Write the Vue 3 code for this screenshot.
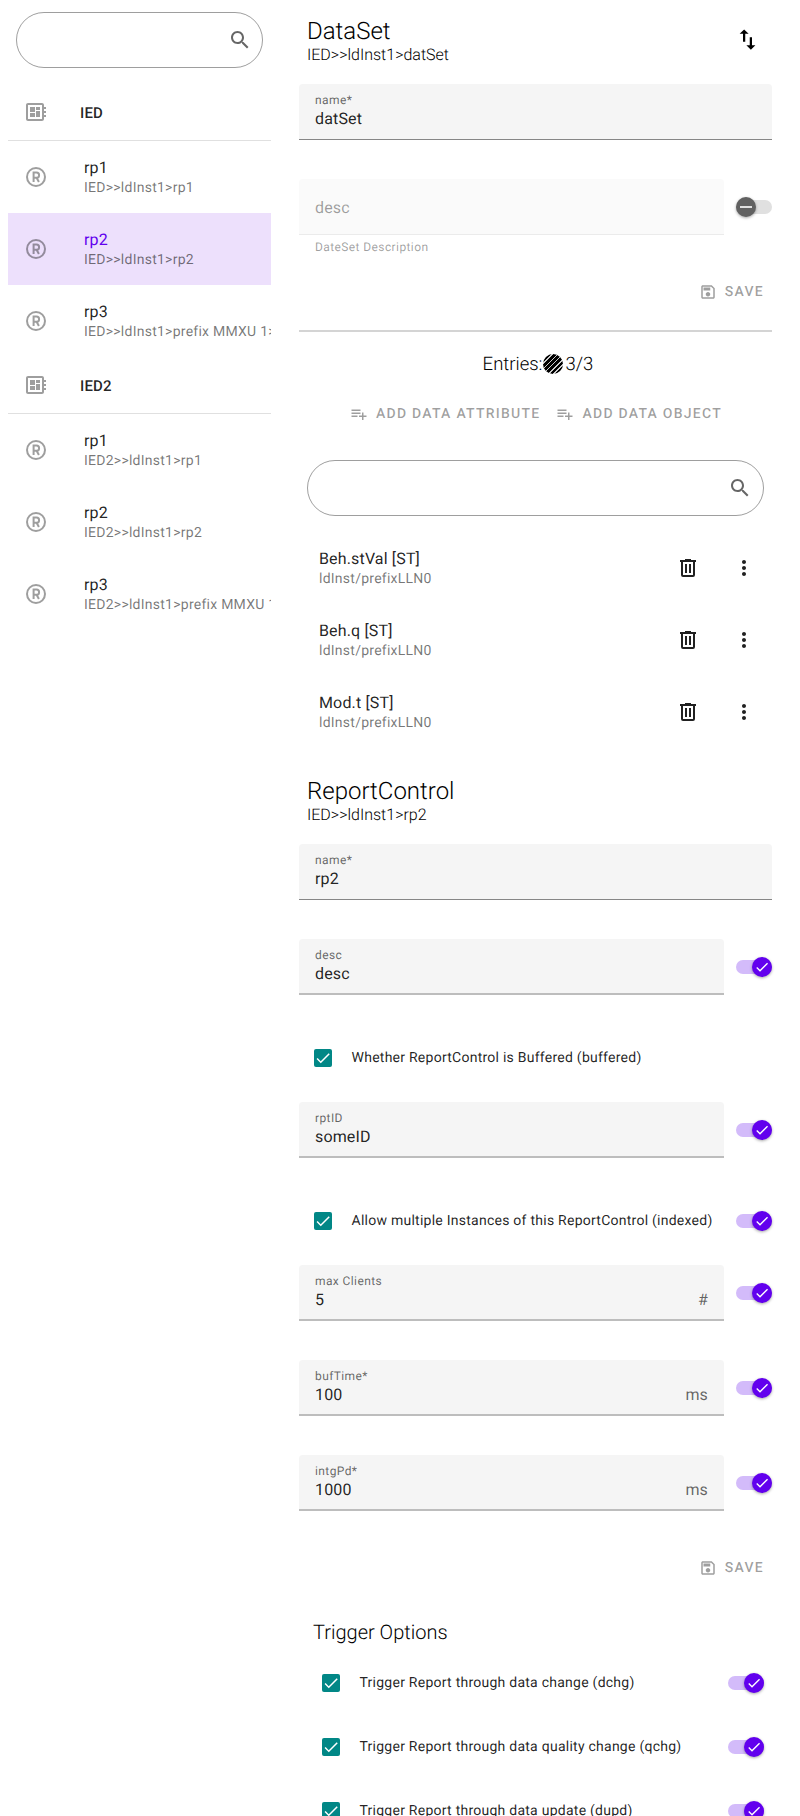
<template>
  <div class="page">
    <aside class="sidebar">
      <div class="search">
        <svg class="icon search-icon" viewBox="0 0 24 24"><path :d="icons.search" /></svg>
      </div>
      <div v-for="ied in ieds" :key="ied.name" class="ied">
        <div class="ied-row">
          <svg class="icon grey" viewBox="0 0 24 24"><path :d="icons.board" /></svg>
          <span>{{ ied.name }}</span>
        </div>
        <div
          v-for="rp in ied.reports"
          :key="rp.path"
          class="rp-row"
          :class="{ selected: rp.selected }"
        >
          <svg class="icon grey" viewBox="0 0 24 24">
            <circle cx="12" cy="12" r="9" fill="none" stroke="currentColor" stroke-width="2" />
            <path d="M9.6 17V7.6h2.9a2.6 2.6 0 0 1 0 5.2H9.6M12.6 12.8l2.3 4.2" fill="none" stroke="currentColor" stroke-width="2" />
          </svg>
          <div class="rp-text">
            <div class="rp-name">{{ rp.name }}</div>
            <div class="rp-path">{{ rp.path }}</div>
          </div>
        </div>
      </div>
    </aside>

    <main class="content">
      <header class="head">
        <div class="head-text">
          <h1>DataSet</h1>
          <div class="crumb">IED&gt;&gt;ldInst1&gt;datSet</div>
        </div>
        <svg class="icon swap" viewBox="0 0 24 24"><path :d="icons.swap" /></svg>
      </header>

      <section class="form">
        <div class="row">
          <div class="field">
            <label>name*</label>
            <div class="value">datSet</div>
          </div>
        </div>
        <div class="row">
          <div class="field-wrap">
            <div class="field disabled">
              <div class="value">desc</div>
            </div>
            <div class="helper">DateSet Description</div>
          </div>
          <div class="switch off">
            <span class="thumb"><i class="minus"></i></span>
          </div>
        </div>
        <div class="actions">
          <button class="flat">
            <svg class="icon small" viewBox="0 0 24 24"><path :d="icons.save" /></svg>
            SAVE
          </button>
        </div>
      </section>

      <hr class="divider" />

      <div class="entries">Entries:<span class="hatch"></span>3/3</div>

      <div class="add-row">
        <button class="flat">
          <svg class="icon small" viewBox="0 0 24 24"><path :d="icons.add" /></svg>
          ADD DATA ATTRIBUTE
        </button>
        <button class="flat">
          <svg class="icon small" viewBox="0 0 24 24"><path :d="icons.add" /></svg>
          ADD DATA OBJECT
        </button>
      </div>

      <div class="search wide">
        <svg class="icon search-icon" viewBox="0 0 24 24"><path :d="icons.search" /></svg>
      </div>

      <ul class="entry-list">
        <li v-for="entry in entries" :key="entry" class="entry">
          <div class="entry-text">
            <div class="rp-name">{{ entry }}</div>
            <div class="rp-path">ldInst/prefixLLN0</div>
          </div>
          <span class="icon-btn">
            <svg class="icon dark" viewBox="0 0 24 24"><path :d="icons.trash" /></svg>
          </span>
          <span class="icon-btn">
            <svg class="icon dark" viewBox="0 0 24 24"><path :d="icons.more" /></svg>
          </span>
        </li>
      </ul>

      <header class="head report-head">
        <div class="head-text">
          <h1>ReportControl</h1>
          <div class="crumb">IED&gt;&gt;ldInst1&gt;rp2</div>
        </div>
      </header>

      <section class="form">
        <template v-for="item in reportFields" :key="item.label">
          <div v-if="item.check" class="row check-row">
            <div class="check-label">
              <span class="checkbox"><svg viewBox="0 0 24 24"><path :d="icons.check" /></svg></span>
              <span>{{ item.label }}</span>
            </div>
            <div v-if="item.toggle" class="switch">
              <span class="thumb"><svg viewBox="0 0 24 24"><path :d="icons.check" /></svg></span>
            </div>
          </div>
          <div v-else class="row">
            <div class="field-wrap">
              <div class="field" :class="{ thick: item.toggle }">
                <label>{{ item.label }}</label>
                <div class="value">{{ item.value }}</div>
                <span v-if="item.suffix" class="suffix">{{ item.suffix }}</span>
              </div>
            </div>
            <div v-if="item.toggle" class="switch">
              <span class="thumb"><svg viewBox="0 0 24 24"><path :d="icons.check" /></svg></span>
            </div>
          </div>
        </template>
        <div class="actions">
          <button class="flat">
            <svg class="icon small" viewBox="0 0 24 24"><path :d="icons.save" /></svg>
            SAVE
          </button>
        </div>
      </section>

      <section class="triggers">
        <h2>Trigger Options</h2>
        <div v-for="label in triggers" :key="label" class="trigger">
          <div class="check-label">
            <span class="checkbox"><svg viewBox="0 0 24 24"><path :d="icons.check" /></svg></span>
            <span>{{ label }}</span>
          </div>
          <div class="switch">
            <span class="thumb"><svg viewBox="0 0 24 24"><path :d="icons.check" /></svg></span>
          </div>
        </div>
      </section>
    </main>
  </div>
</template>

<script setup>
const icons = {
  search:
    "M15.5 14h-.79l-.28-.27C15.41 12.59 16 11.11 16 9.5 16 5.91 13.09 3 9.5 3S3 5.91 3 9.5 5.91 16 9.5 16c1.61 0 3.09-.59 4.23-1.57l.27.28v.79l5 4.99L20.49 19l-4.99-5zm-6 0C7.01 14 5 11.99 5 9.5S7.01 5 9.5 5 14 7.01 14 9.5 11.99 14 9.5 14z",
  board:
    "M22 9V7h-2V5c0-1.1-.9-2-2-2H4c-1.1 0-2 .9-2 2v14c0 1.1.9 2 2 2h14c1.1 0 2-.9 2-2v-2h2v-2h-2v-2h2v-2h-2V9h2zm-4 10H4V5h14v14zM6 13h5v4H6zm6-6h4v3h-4zM6 7h5v5H6zm6 4h4v6h-4z",
  swap: "M16 17.01V10h-2v7.01h-3L15 21l4-3.99h-3zM9 3L5 6.99h3V14h2V6.99h3L9 3z",
  save: "M17 3H5c-1.11 0-2 .9-2 2v14c0 1.1.89 2 2 2h14c1.1 0 2-.9 2-2V7l-4-4zm2 16H5V5h11.17L19 7.83V19zm-7-7c-1.66 0-3 1.34-3 3s1.34 3 3 3 3-1.34 3-3-1.34-3-3-3zM6 6h9v4H6z",
  add: "M14 10H2v2h12v-2zm0-4H2v2h12V6zm4 8v-4h-2v4h-4v2h4v4h2v-4h4v-2h-4zM2 16h8v-2H2v2z",
  trash:
    "M9 3v1H4v2h1v13a2 2 0 0 0 2 2h10a2 2 0 0 0 2-2V6h1V4h-5V3H9zM7 6h10v13H7V6zm2 2v9h2V8H9zm4 0v9h2V8h-2z",
  more: "M12 8c1.1 0 2-.9 2-2s-.9-2-2-2-2 .9-2 2 .9 2 2 2zm0 2c-1.1 0-2 .9-2 2s.9 2 2 2 2-.9 2-2-.9-2-2-2zm0 6c-1.1 0-2 .9-2 2s.9 2 2 2 2-.9 2-2-.9-2-2-2z",
  check: "M9 16.2 4.8 12l-1.4 1.4L9 19 21 7l-1.4-1.4L9 16.2z",
};

const ieds = [
  {
    name: "IED",
    reports: [
      { name: "rp1", path: "IED>>ldInst1>rp1" },
      { name: "rp2", path: "IED>>ldInst1>rp2", selected: true },
      { name: "rp3", path: "IED>>ldInst1>prefix MMXU 1>rp3" },
    ],
  },
  {
    name: "IED2",
    reports: [
      { name: "rp1", path: "IED2>>ldInst1>rp1" },
      { name: "rp2", path: "IED2>>ldInst1>rp2" },
      { name: "rp3", path: "IED2>>ldInst1>prefix MMXU 1>rp3" },
    ],
  },
];

const entries = ["Beh.stVal [ST]", "Beh.q [ST]", "Mod.t [ST]"];

const reportFields = [
  { label: "name*", value: "rp2" },
  { label: "desc", value: "desc", toggle: true },
  { label: "Whether ReportControl is Buffered (buffered)", check: true },
  { label: "rptID", value: "someID", toggle: true },
  { label: "Allow multiple Instances of this ReportControl (indexed)", check: true, toggle: true },
  { label: "max Clients", value: "5", suffix: "#", toggle: true },
  { label: "bufTime*", value: "100", suffix: "ms", toggle: true },
  { label: "intgPd*", value: "1000", suffix: "ms", toggle: true },
];

const triggers = [
  "Trigger Report through data change (dchg)",
  "Trigger Report through data quality change (qchg)",
  "Trigger Report through data update (dupd)",
];
</script>

<style>
html,
body {
  overflow: hidden;
}
</style>

<style scoped>
.page {
  display: flex;
  height: 1816px;
  overflow: hidden;
  background: #fff;
  color: rgba(0, 0, 0, 0.87);
  font-family: Roboto, sans-serif;
  text-rendering: geometricPrecision;
}

.icon {
  display: block;
  width: 24px;
  height: 24px;
  flex: none;
  fill: currentColor;
}

.grey {
  color: rgba(0, 0, 0, 0.38);
}

.dark {
  color: rgba(0, 0, 0, 0.87);
}

.small {
  width: 18px;
  height: 18px;
}

/* sidebar */
.sidebar {
  flex: none;
  width: 263px;
  margin-left: 8px;
  padding-top: 12px;
  overflow: hidden;
}

.search {
  display: flex;
  align-items: center;
  justify-content: flex-end;
  height: 56px;
  margin: 0 8px 16px;
  padding-right: 10px;
  border: 1px solid rgba(0, 0, 0, 0.38);
  border-radius: 28px;
  box-sizing: border-box;
}

.search-icon {
  color: rgba(0, 0, 0, 0.6);
}

.search.wide {
  margin: 28px 8.5px 16px 8px;
  padding-right: 11px;
}

.ied-row {
  display: flex;
  align-items: center;
  gap: 32px;
  height: 56px;
  padding-left: 16px;
  border-bottom: 1px solid #e0e0e0;
  font-size: 15px;
  font-weight: 500;
  letter-spacing: 0.15px;
}

.ied-row span {
  padding-top: 2px;
}

.rp-row {
  display: flex;
  align-items: center;
  gap: 36px;
  height: 72px;
  padding-left: 16px;
  white-space: nowrap;
  overflow: hidden;
}

.rp-row.selected {
  background: #ede0fc;
}

.rp-row.selected .rp-name {
  color: #6200ee;
}

.rp-text,
.entry-text {
  padding-top: 1px;
}

.rp-name {
  font-size: 16px;
  line-height: 21px;
  letter-spacing: 0.15px;
}

.rp-path {
  font-size: 14px;
  line-height: 20px;
  letter-spacing: 0.25px;
  color: rgba(0, 0, 0, 0.54);
}

/* main column */
.content {
  flex: 1;
  min-width: 0;
  padding: 14px 28px 0;
}

.head {
  display: flex;
  align-items: center;
  justify-content: space-between;
  height: 48px;
  padding-left: 8px;
  margin-bottom: 22px;
}

.head-text {
  padding-top: 2px;
  color: #000;
}

.report-head {
  margin-top: 26px;
}

h1 {
  margin: 0;
  font-size: 24px;
  font-weight: 300;
  line-height: 32px;
}

.crumb {
  font-size: 16px;
  font-weight: 300;
  line-height: 16px;
}

.swap {
  width: 27px;
  height: 27px;
  margin-right: 11.5px;
  margin-top: 3px;
  color: #000;
}

.form {
  display: flex;
  flex-direction: column;
  gap: 20px;
}

.row {
  display: flex;
  align-items: flex-start;
  gap: 12px;
}

.field-wrap {
  flex: 1;
  min-width: 0;
  min-height: 75px;
}

.row > .field {
  flex: 1;
  margin-bottom: 19px;
}

.field {
  position: relative;
  height: 56px;
  box-sizing: border-box;
  padding: 9px 16px 0;
  background: #f5f5f5;
  border-radius: 4px 4px 0 0;
  border-bottom: 1px solid rgba(0, 0, 0, 0.45);
}

.field.thick {
  border-bottom: 2px solid #bdbdbd;
}

.field label {
  display: block;
  font-size: 12px;
  line-height: 14px;
  letter-spacing: 0.4px;
  color: rgba(0, 0, 0, 0.6);
}

.value {
  font-size: 16px;
  line-height: 24px;
  letter-spacing: 0.15px;
}

.suffix {
  position: absolute;
  right: 16px;
  top: 23px;
  font-size: 16px;
  line-height: 24px;
  letter-spacing: 0.15px;
  color: rgba(0, 0, 0, 0.6);
}

.field.disabled {
  padding-top: 17px;
  background: #fafafa;
  border-bottom-color: rgba(0, 0, 0, 0.06);
}

.field.disabled .value {
  color: rgba(0, 0, 0, 0.38);
}

.helper {
  padding: 5px 16px 0;
  font-size: 12px;
  line-height: 14px;
  letter-spacing: 0.4px;
  color: rgba(0, 0, 0, 0.38);
}

/* switch */
.switch {
  position: relative;
  flex: none;
  width: 36px;
  height: 14px;
  margin-top: 21px;
  border-radius: 7px;
  background: #d3bbfa;
}

.thumb {
  position: absolute;
  top: -3px;
  right: 0;
  display: flex;
  align-items: center;
  justify-content: center;
  width: 20px;
  height: 20px;
  border-radius: 50%;
  background: #6200ee;
  box-shadow: 0 1px 3px rgba(0, 0, 0, 0.35);
}

.thumb svg {
  width: 16px;
  height: 16px;
  fill: #fff;
}

.switch.off {
  background: #e0e0e0;
}

.switch.off .thumb {
  right: auto;
  left: 0;
  background: #616161;
}

.minus {
  width: 12px;
  height: 2px;
  background: #e0e0e0;
}

/* checkbox rows */
.check-row {
  align-items: center;
  justify-content: space-between;
  height: 48px;
}

.check-row .switch {
  margin-top: 0;
}

.check-label {
  display: flex;
  align-items: center;
  gap: 19.5px;
  padding-left: 15px;
  font-size: 14px;
  letter-spacing: 0.25px;
}

.checkbox {
  display: flex;
  flex: none;
  width: 18px;
  height: 18px;
  border-radius: 2px;
  background: #018786;
}

.checkbox svg {
  width: 18px;
  height: 18px;
  fill: #fff;
}

/* buttons */
.actions {
  display: flex;
  justify-content: flex-end;
}

.flat {
  display: inline-flex;
  align-items: center;
  gap: 8px;
  height: 36px;
  padding: 0 8px;
  border: 0;
  background: none;
  color: rgba(0, 0, 0, 0.38);
  font-family: inherit;
  font-size: 14px;
  font-weight: 500;
  letter-spacing: 1.25px;
  text-rendering: inherit;
}

.divider {
  height: 2px;
  margin: 20px 0 0;
  border: 0;
  background: #d4d4d4;
}

.entries {
  display: flex;
  align-items: center;
  justify-content: center;
  margin-top: 18px;
  padding-left: 5px;
  color: #000;
  font-size: 18.5px;
  font-weight: 300;
  line-height: 28px;
}

.hatch {
  width: 20px;
  height: 20px;
  margin: 0 2px 0 1px;
  border-radius: 50%;
  background: repeating-linear-gradient(135deg, #000 0 2.5px, #ccc 2.5px 3.7px);
}

.add-row {
  display: flex;
  justify-content: center;
  margin-top: 18px;
  padding-left: 1px;
}

.entry-list {
  margin: 0;
  padding: 0;
  list-style: none;
}

.entry {
  display: flex;
  align-items: center;
  height: 72px;
  padding: 0 4px 0 20px;
}

.entry-text {
  flex: 1;
  min-width: 0;
}

.icon-btn {
  display: flex;
  align-items: center;
  justify-content: center;
  width: 48px;
  height: 48px;
  margin-left: 8px;
}

/* trigger section */
.triggers {
  padding: 32px 8px 0;
}

h2 {
  margin: 0 0 13px;
  padding-left: 6px;
  color: #000;
  font-size: 20px;
  font-weight: 300;
  line-height: 28px;
}

.trigger {
  display: flex;
  align-items: center;
  justify-content: space-between;
  height: 48px;
  margin-bottom: 16px;
}

.trigger .switch {
  margin-top: 0;
}
</style>
